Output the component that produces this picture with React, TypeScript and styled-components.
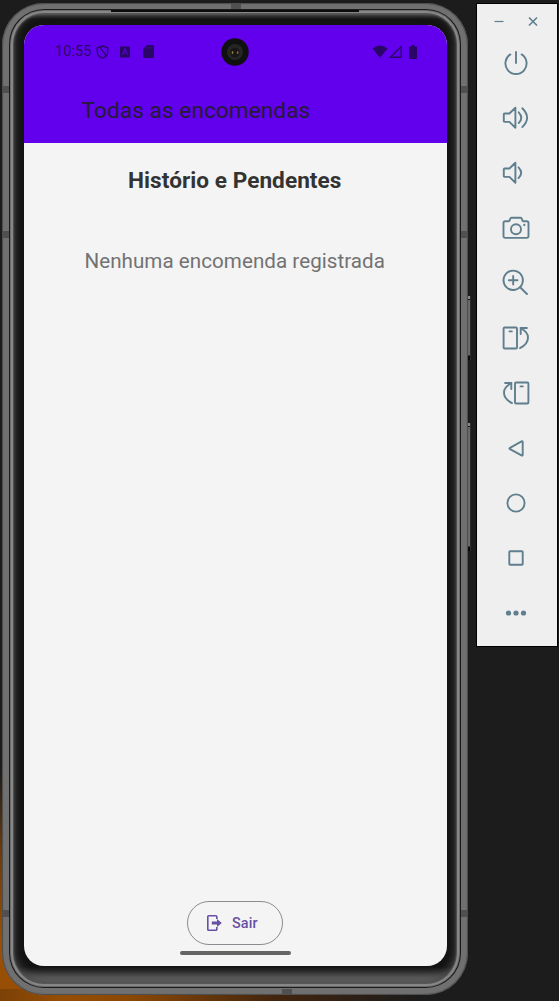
import React from 'react';
import styled, { createGlobalStyle } from 'styled-components';

const GlobalStyle = createGlobalStyle`
  * { box-sizing: border-box; }
  body { margin: 0; background: #1c1c1c; font-family: Roboto, 'Liberation Sans', sans-serif; }
`;

const Desktop = styled.div`
  width: 559px;
  height: 1001px;
  padding: 3px 0 0 2px;
  display: flex;
  align-items: flex-start;
  overflow: hidden;
  background:
    linear-gradient(90deg, #7c4106, #964e05 14%, #8a4806 30%, rgba(72, 38, 12, 0.9) 62%, rgba(28, 28, 28, 0) 95%) 0 100% / 440px 12px no-repeat,
    linear-gradient(180deg, rgba(28, 28, 28, 0), #6b3a0c 35%, #9a5004 75%, #964e05) 0 100% / 42px 230px no-repeat,
    #1c1c1c;
`;

const Phone = styled.div`
  position: relative;
  flex: none;
  width: 466px;
  height: 992px;
  padding: 6px 7px 7px;
  border-radius: 42px;
  background: #707070;
  box-shadow: inset 0 0 1px 1px #4b4b4b;
`;

const Rim = styled.div`
  height: 100%;
  padding: 1px;
  border-radius: 35px;
  background: #1b1b1b;
`;

const Bezel = styled.div`
  height: 100%;
  padding: 15px 13px 22px 14px;
  border-radius: 34px;
  background:
    linear-gradient(180deg, #929292, #6d6d6d 3px, #303030 6px, rgba(20, 20, 20, 0) 9px),
    linear-gradient(0deg, #8b8b8b, #777 4px, #555 10px, #292929 16px, rgba(20, 20, 20, 0) 20px),
    #131313;
  box-shadow: inset 0 0 1px 1px #686868, inset 0 0 1px 3px #8c8c8c, inset 0 0 2px 4px #505050, inset 0 -3px 8px 4px #4a4a4a;
`;

const TopSlot = styled.i`
  position: absolute;
  left: 109px;
  top: 7px;
  width: 248px;
  height: 2px;
  background: #0c0c0c;
`;

const Screen = styled.main`
  width: 423px;
  height: 941px;
  display: flex;
  flex-direction: column;
  align-items: center;
  overflow: hidden;
  border-radius: 20px;
  background: #f4f4f4;
`;

const AppHeader = styled.header`
  width: 100%;
  height: 118px;
  flex: none;
  background: #6200ee;
`;

const StatusBar = styled.div`
  height: 53px;
  padding: 0 30px 0 31px;
  display: grid;
  grid-template-columns: 166px 28px 1fr;
  align-items: center;
  color: #2a0766;
`;

const StatusGroup = styled.div<{ $end?: boolean }>`
  display: flex;
  align-items: center;
  justify-content: ${(p) => (p.$end ? 'flex-end' : 'flex-start')};
`;

const Clock = styled.span`
  width: 41px;
  font-size: 14.4px;
  letter-spacing: 0.1px;
  line-height: 20px;
`;

const Glyph = styled.svg<{ $gap?: number }>`
  display: block;
  flex: none;
  margin-left: ${(p) => p.$gap ?? 0}px;
`;

const AppTitle = styled.h1`
  margin: 18px 0 0 57.5px;
  font-size: 22.6px;
  font-weight: 400;
  line-height: 30px;
  letter-spacing: 0.08px;
  color: #251b36;
`;

const Heading = styled.h2`
  margin: 23px 1.5px 0 0;
  font-size: 22.6px;
  font-weight: 700;
  line-height: 30px;
  letter-spacing: 0.05px;
  color: #333;
`;

const EmptyMessage = styled.p`
  margin: 50px 1.5px 0 0;
  font-size: 20.6px;
  line-height: 30px;
  letter-spacing: 0.04px;
  color: #727272;
  white-space: nowrap;
`;

const ExitButton = styled.button`
  width: 96px;
  height: 44px;
  margin: auto 1px 0 0;
  padding: 0 0 0 18px;
  display: flex;
  align-items: center;
  gap: 10px;
  border: 1px solid #8d8990;
  border-radius: 22px;
  background: transparent;
  color: #6750a4;
  font: 500 14.4px Roboto, sans-serif;
  letter-spacing: 0.1px;
`;

const HomeHandle = styled.div`
  width: 111px;
  height: 4px;
  flex: none;
  margin: 6px 0 11px;
  border-radius: 2px;
  background: #646464;
`;

const SideKey = styled.i<{ $top: number; $height: number }>`
  position: absolute;
  left: 466px;
  top: ${(p) => p.$top}px;
  width: 3px;
  height: ${(p) => p.$height}px;
  border: solid #2c2c2c;
  border-width: 0 1px 0 0;
  background: linear-gradient(180deg, #8a8a8a 3px, #111 3px, #111 4px, #696969 4px, #696969 calc(100% - 5px), #080808 calc(100% - 4px));
`;

const Antenna = styled.i<{ $left: number; $top: number; $flat?: boolean }>`
  position: absolute;
  left: ${(p) => p.$left}px;
  top: ${(p) => p.$top}px;
  width: ${(p) => (p.$flat ? 10 : 6)}px;
  height: ${(p) => (p.$flat ? 6 : 7)}px;
  background: #505050;
`;

const Toolbar = styled.aside`
  width: 82px;
  height: 644px;
  flex: none;
  margin-left: 8px;
  padding-right: 2px;
  display: flex;
  flex-direction: column;
  align-items: center;
  border: 1px solid #000;
  background: #efefef;
  color: #5f7f8e;
`;

const WindowControls = styled.div`
  height: 31px;
  padding-top: 4px;
  display: flex;
  align-items: center;
  gap: 22px;
`;

const ToolButton = styled.button`
  width: 55px;
  height: 55px;
  flex: none;
  padding: 0;
  display: grid;
  place-items: center;
  border: 0;
  background: none;
  color: inherit;
`;

const tools: { name: string; art: React.ReactNode }[] = [
  { name: 'Power', art: <path d="M9.400 6.400A10.600 10.600 0 1 0 20.600 6.400M15 4v11" /> },
  { name: 'Volume up', art: <path d="M2.800 11.300q0-.8.8-.8h4.800l6-5.800v20l-6-5.800H3.600q-.8 0-.8-.8zM17.700 9.300q5.200 5.400 0 10.800M21.300 5.300q9.600 9.500 0 18.800" /> },
  { name: 'Volume down', art: <path d="M2.800 11.300q0-.8.8-.8h4.800l6-5.800v20l-6-5.800H3.600q-.8 0-.8-.8zM17.500 9.300q5.400 5.400 0 10.800" /> },
  { name: 'Screenshot', art: <><path d="M4.300 8.300h3.200q1 0 1.200-1l.5-1.600q.3-1 1.300-1h9q1 0 1.300 1l.5 1.600q.2 1 1.200 1h3.200q1.800 0 1.800 1.800v13q0 1.800-1.800 1.800H4.300q-1.800 0-1.800-1.800v-13q0-1.800 1.800-1.800z" /><circle cx="15" cy="16.2" r="5" /><circle cx="23.3" cy="12" r=".5" strokeWidth="1.3" /></> },
  { name: 'Zoom', art: <><circle cx="12.2" cy="12.3" r="9.7" /><path d="M7.900 12.300h8.600M12.200 8v8.600M19.100 19.200l6.900 6.800" /></> },
  { name: 'Rotate left', art: <><rect x="2.6" y="4.5" width="13.4" height="21" rx="1" /><path d="M8.500 8.400h2.300M19 25.100q8-4 8-10.600 0-5.500-7-9" /><path d="M19.700 11V5h6.200" strokeLinejoin="miter" /></> },
  { name: 'Rotate right', art: <><rect x="14" y="4.5" width="13.4" height="21" rx="1" /><path d="M19.500 8.400h2.300M11 25.100q-8-4-8-10.600 0-5.500 7-9" /><path d="M10.300 11V5H4.100" strokeLinejoin="miter" /></> },
  { name: 'Back', art: <path d="M21.700 9v12.800q0 1.300-1.200.6L9 16.100q-1.100-.7 0-1.300l11.500-6.400q1.200-.6 1.200.6z" /> },
  { name: 'Home', art: <circle cx="15" cy="15" r="8.6" /> },
  { name: 'Overview', art: <rect x="8.3" y="8.3" width="13.4" height="13.4" rx=".8" /> },
  { name: 'More', art: <g fill="currentColor" stroke="none"><circle cx="7.5" cy="15" r="2.6" /><circle cx="15" cy="15" r="2.6" /><circle cx="22.5" cy="15" r="2.6" /></g> },
];

const CameraLens = () => (
  <Glyph width="28" height="28" viewBox="0 0 28 28">
    <circle cx="14" cy="14" r="13.7" fill="#101010" />
    <circle cx="14" cy="14" r="8" fill="#252525" />
    <circle cx="14" cy="14.5" r="4.8" fill="#171717" />
    <ellipse cx="11.5" cy="14.5" rx=".8" ry="1.5" fill="#9b8134" />
    <ellipse cx="16.7" cy="14.5" rx=".8" ry="1.5" fill="#a35e46" />
  </Glyph>
);

export default function App() {
  return (
    <>
      <GlobalStyle />
      <Desktop>
        <Phone>
          <Rim>
            <Bezel>
              <Screen>
                <AppHeader>
                  <StatusBar>
                    <StatusGroup>
                      <Clock>10:55</Clock>
                      <Glyph width="13" height="14" viewBox="0 0 13 14" fill="none" stroke="currentColor" strokeWidth="1.4">
                        <path d="M6.500 1 1.300 2.800v4.100q0 4 5.200 6.200 5.200-2.200 5.200-6.200V2.800z" />
                        <path d="M4.600 2q.2 3 2.700 4.800t2.300 4.300" />
                      </Glyph>
                      <Glyph $gap={11} width="10" height="12" viewBox="0 0 10 12">
                        <rect y=".5" width="10" height="11" rx="1" fill="currentColor" />
                        <path d="m2.500 8.800 2.300-6h.4l2.300 6M3.400 6.800h3.200" fill="none" stroke="#5503cc" strokeWidth="1.1" />
                      </Glyph>
                      <Glyph $gap={12.5} width="11" height="13" viewBox="0 0 11 13">
                        <path d="M4 0h6q1 0 1 1v11q0 1-1 1H1q-1 0-1-1V4z" fill="currentColor" />
                        <path d="M4.200 1.700v2M6.200 1.700v2M8.200 1.700v2" stroke="#4b04b0" strokeWidth=".8" />
                      </Glyph>
                    </StatusGroup>
                    <CameraLens />
                    <StatusGroup $end>
                      <Glyph width="16" height="13" viewBox="0 0 16 13" fill="currentColor"><path d="M.5 3.500Q8-2.500 15.500 3.500L8 12.700z" /></Glyph>
                      <Glyph $gap={1} width="13" height="13" viewBox="0 0 13 13" fill="none" stroke="currentColor" strokeWidth="1.4"><path d="M12.200 1.600v10.700H1.500z" /></Glyph>
                      <Glyph $gap={7} width="8" height="14" viewBox="0 0 8 14" fill="currentColor"><path d="M2.500 0h3v1.500H7q1 0 1 1V13q0 1-1 1H1q-1 0-1-1V2.500q0-1 1-1h1.500z" /></Glyph>
                    </StatusGroup>
                  </StatusBar>
                  <AppTitle>Todas as encomendas</AppTitle>
                </AppHeader>
                <Heading>Histório e Pendentes</Heading>
                <EmptyMessage>Nenhuma encomenda registrada</EmptyMessage>
                <ExitButton>
                  <Glyph width="16" height="18" viewBox="0 0 16 18" fill="none" stroke="currentColor" strokeWidth="1.6">
                    <path d="M10.800 5V2.600q0-.9-.9-.9H2.700q-.9 0-.9.9v12.800q0 .9.9.9h7.200q.9 0 .9-.9V13" />
                    <path d="M5.800 7.600H11V5L15.800 9 11 13v-2.600H5.800z" fill="currentColor" stroke="none" />
                  </Glyph>
                  Sair
                </ExitButton>
                <HomeHandle />
              </Screen>
            </Bezel>
          </Rim>
          <TopSlot />
          <Antenna $left={229} $top={0} $flat />
          <Antenna $left={280} $top={986} $flat />
          <Antenna $left={1} $top={83} />
          <Antenna $left={1} $top={228} />
          <Antenna $left={1} $top={907} />
          <Antenna $left={459} $top={83} />
          <Antenna $left={459} $top={228} />
          <Antenna $left={459} $top={907} />
          <SideKey $top={293} $height={64} />
          <SideKey $top={420} $height={128} />
        </Phone>
        <Toolbar>
          <WindowControls>
            <Glyph width="12" height="12" viewBox="0 0 12 12" stroke="currentColor" strokeWidth="1.2"><path d="M1.500 5.500h9" /></Glyph>
            <Glyph width="12" height="12" viewBox="0 0 12 12" stroke="currentColor" strokeWidth="1.6"><path d="m2 1.500 8 8m0-8-8 8" /></Glyph>
          </WindowControls>
          {tools.map((tool) => (
            <ToolButton key={tool.name} aria-label={tool.name}>
              <Glyph width="30" height="30" viewBox="0 0 30 30" fill="none" stroke="currentColor" strokeWidth="1.9" strokeLinecap="round" strokeLinejoin="round">
                {tool.art}
              </Glyph>
            </ToolButton>
          ))}
        </Toolbar>
      </Desktop>
    </>
  );
}
